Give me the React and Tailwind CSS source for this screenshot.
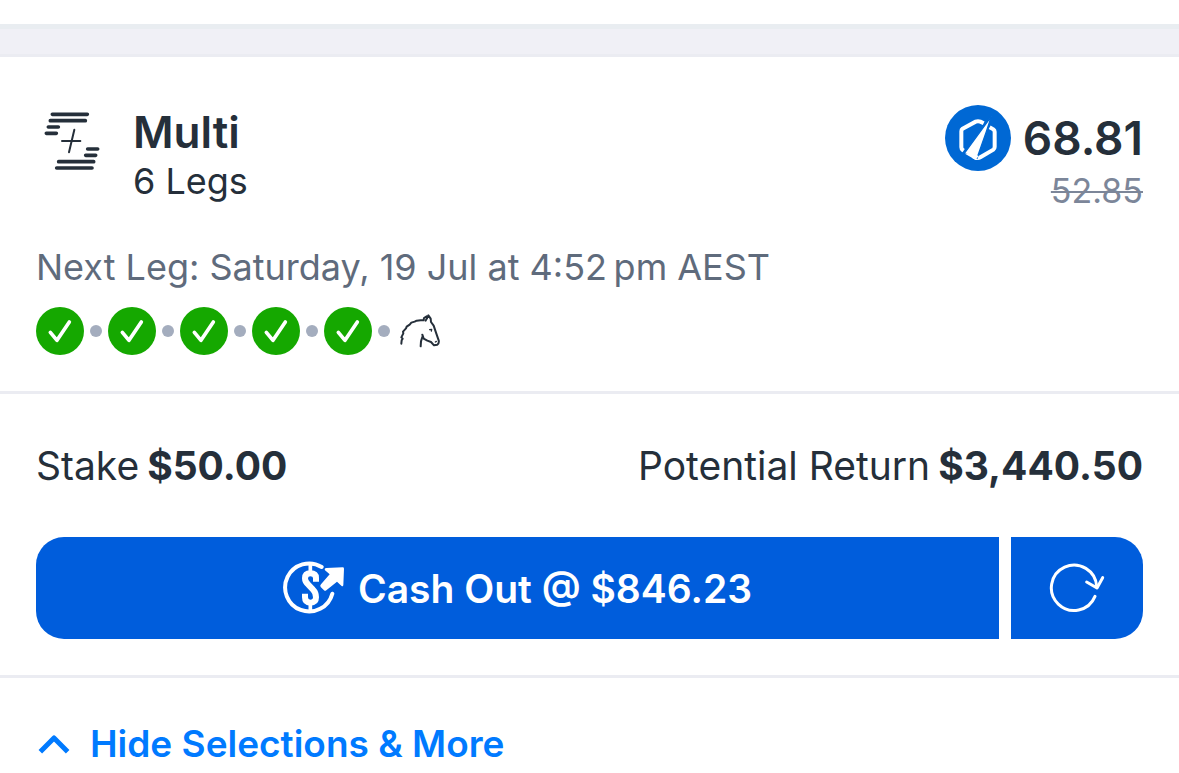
import React from 'react';

const legs = ['Leg 1', 'Leg 2', 'Leg 3', 'Leg 4', 'Leg 5'];

const MultiIcon = () => (
  <svg className="w-[56px] h-[60px]" viewBox="42 48 168 180" fill="none" stroke="currentColor" strokeLinecap="round" aria-hidden="true">
    <g strokeWidth="11">
      <path d="M67 58H172M61 77H166M55 96H85M49 115H79" />
      <path d="M173 162H203M167 181H197M86 200H191M80 219H186" />
    </g>
    <path strokeWidth="6" d="M133 104L117 172M96 138H151" />
  </svg>
);

const BoostIcon = () => (
  <svg className="w-[66px] h-[66px]" viewBox="42 30 198 198" fill="none" aria-hidden="true">
    <circle cx="141" cy="129" r="99" fill="#0068d4" />
    <path
      d="M98 167L95 165Q91 162 91 157V109Q91 104 95 101L134 80Q141 77 148 80L158 85M176 97L187 103Q191 106 191 110V156Q191 161 187 164L148 187Q141 191 134 188L126 184"
      stroke="#fff"
      strokeWidth="12"
    />
    <path d="M181 64L166 110L138 190L100 175Z" fill="#fff" stroke="#0068d4" strokeWidth="4" />
    <path d="M102 176L134 195L142 184L130 172Z" fill="#fff" />
  </svg>
);

const WonLeg = ({ label }) => (
  <svg className="w-12 h-12" viewBox="18 36 144 144" fill="none" role="img" aria-label={`${label} won`}>
    <circle cx="90" cy="108" r="72" fill="#15a800" />
    <path d="M61 112L81 136L118 81" stroke="#fff" strokeWidth="11" strokeLinecap="round" strokeLinejoin="round" />
  </svg>
);

const HorseIcon = () => (
  <svg className="w-[40px] h-[34px]" viewBox="270 57 120 102" fill="none" stroke="currentColor" strokeWidth="6" strokeLinecap="round" strokeLinejoin="round" role="img" aria-label="Racing leg">
    <path d="M274 146L275 136L278 131L274 127L280 115L279 110L288 100L290 95L299 89L304 83L314 80L320 77L332 76L341 76L342 69L350 64L351 70" />
    <path d="M347 77L355 61L362 71L363 81L371 92L378 113L386 136Q388 145 382 149L372 151L363 141L352 137L341 131L337 119" />
    <path d="M337 126L333 139L332 154" />
    <path strokeWidth="4" d="M359 104L365 103L364 108M376 141L379 139" />
  </svg>
);

const CashOutIcon = () => (
  <svg className="w-[61px] h-[54px]" viewBox="36 48 183 162" fill="none" stroke="currentColor" aria-hidden="true">
    <path strokeWidth="12" strokeLinecap="round" d="M152 66A72 72 0 1 0 184 146" />
    <path strokeWidth="11" d="M118 54V84M118 174V204" />
    <path strokeWidth="18" d="M135 110V99Q135 85 118 85Q102 85 102 100Q102 111 112 119L126 134Q135 143 135 157Q135 173 118 173Q102 173 102 157V146" />
    <path fill="currentColor" stroke="none" d="M166 69L215 67Q219 67 219 71L217 120Q216 126 211 122L198 110L166 136Q162 139 159 136L149 126Q146 122 150 118L176 88L162 76Q159 70 166 69Z" />
  </svg>
);

const RefreshIcon = () => (
  <svg className="w-[56px] h-[50px]" viewBox="147 99 168 150" fill="none" stroke="currentColor" strokeWidth="9" strokeLinecap="round" strokeLinejoin="round" aria-hidden="true">
    <path d="M285 199A68 68 0 1 1 290 170" />
    <path d="M260 156L291 174L308 143" />
  </svg>
);

const ChevronUp = () => (
  <svg className="w-[32px] h-[20px]" viewBox="114 72 96 60" fill="none" stroke="currentColor" strokeWidth="15" strokeLinejoin="round" aria-hidden="true">
    <path d="M121 125L162 84L203 125" />
  </svg>
);

const App = () => {
  return (
    <main className="bg-white text-[#252f3a] font-['Inter',sans-serif]">
      {/* Gap between bet cards */}
      <div className="pt-6">
        <div className="h-[33px] bg-[#f0f0f6] border-t-[5px] border-t-[#e9edf1] border-b-[3px] border-b-[#ebecf2]" />
      </div>

      {/* Bet summary */}
      <section className="px-9 pt-12 pb-9 border-b-[3px] border-[#ebecf2]">
        <div className="flex justify-between">
          <div className="flex">
            <div className="pl-2 pt-[6px] pr-[33px]">
              <MultiIcon />
            </div>
            <div>
              <h1 className="text-[44px] leading-[54px] font-semibold">Multi</h1>
              <p className="text-[36px] leading-[44px]">6 Legs</p>
            </div>
          </div>
          <div className="text-right">
            <div className="flex items-center gap-3">
              <BoostIcon />
              <span className="text-[46px] leading-[66px] font-semibold">68.81</span>
            </div>
            <s className="block text-[34px] leading-[40px] text-[#7c8699] decoration-2">52.85</s>
          </div>
        </div>

        <p className="mt-8 text-[36px] leading-[48px] text-[#5f6b7c]">
          Next Leg: Saturday, 19 Jul at 4:52&#8201;pm AEST
        </p>

        <div className="mt-4 flex items-center">
          {legs.map((leg) => (
            <React.Fragment key={leg}>
              <WonLeg label={leg} />
              <span className="mx-[6px] w-3 h-3 rounded-full bg-[#a4adbe]" />
            </React.Fragment>
          ))}
          <div className="pl-1">
            <HorseIcon />
          </div>
        </div>
      </section>

      {/* Stake and cash out */}
      <section className="px-9 pt-12 pb-9 border-b-[3px] border-[#ebecf2]">
        <div className="flex justify-between text-[39px] leading-[47px]">
          <p className="flex gap-2">
            Stake <strong className="font-bold">$50.00</strong>
          </p>
          <p className="flex gap-2">
            Potential Return <strong className="font-bold">$3,440.50</strong>
          </p>
        </div>

        <div className="mt-12 flex gap-3 h-[102px] text-white">
          <button type="button" className="flex-1 flex items-center justify-center gap-[14px] rounded-l-[28px] bg-[#005ddc] text-[39px] leading-[47px] font-semibold">
            <CashOutIcon />
            Cash Out @ $846.23
          </button>
          <button type="button" aria-label="Refresh cash out" className="w-[132px] flex items-center justify-center rounded-r-[28px] bg-[#005ddc]">
            <RefreshIcon />
          </button>
        </div>
      </section>

      <button type="button" className="mt-[42px] px-[38px] flex items-center gap-5 text-[37px] leading-[47px] font-semibold text-[#007aff]">
        <ChevronUp />
        Hide Selections &amp; More
      </button>
    </main>
  );
};

export default App;
